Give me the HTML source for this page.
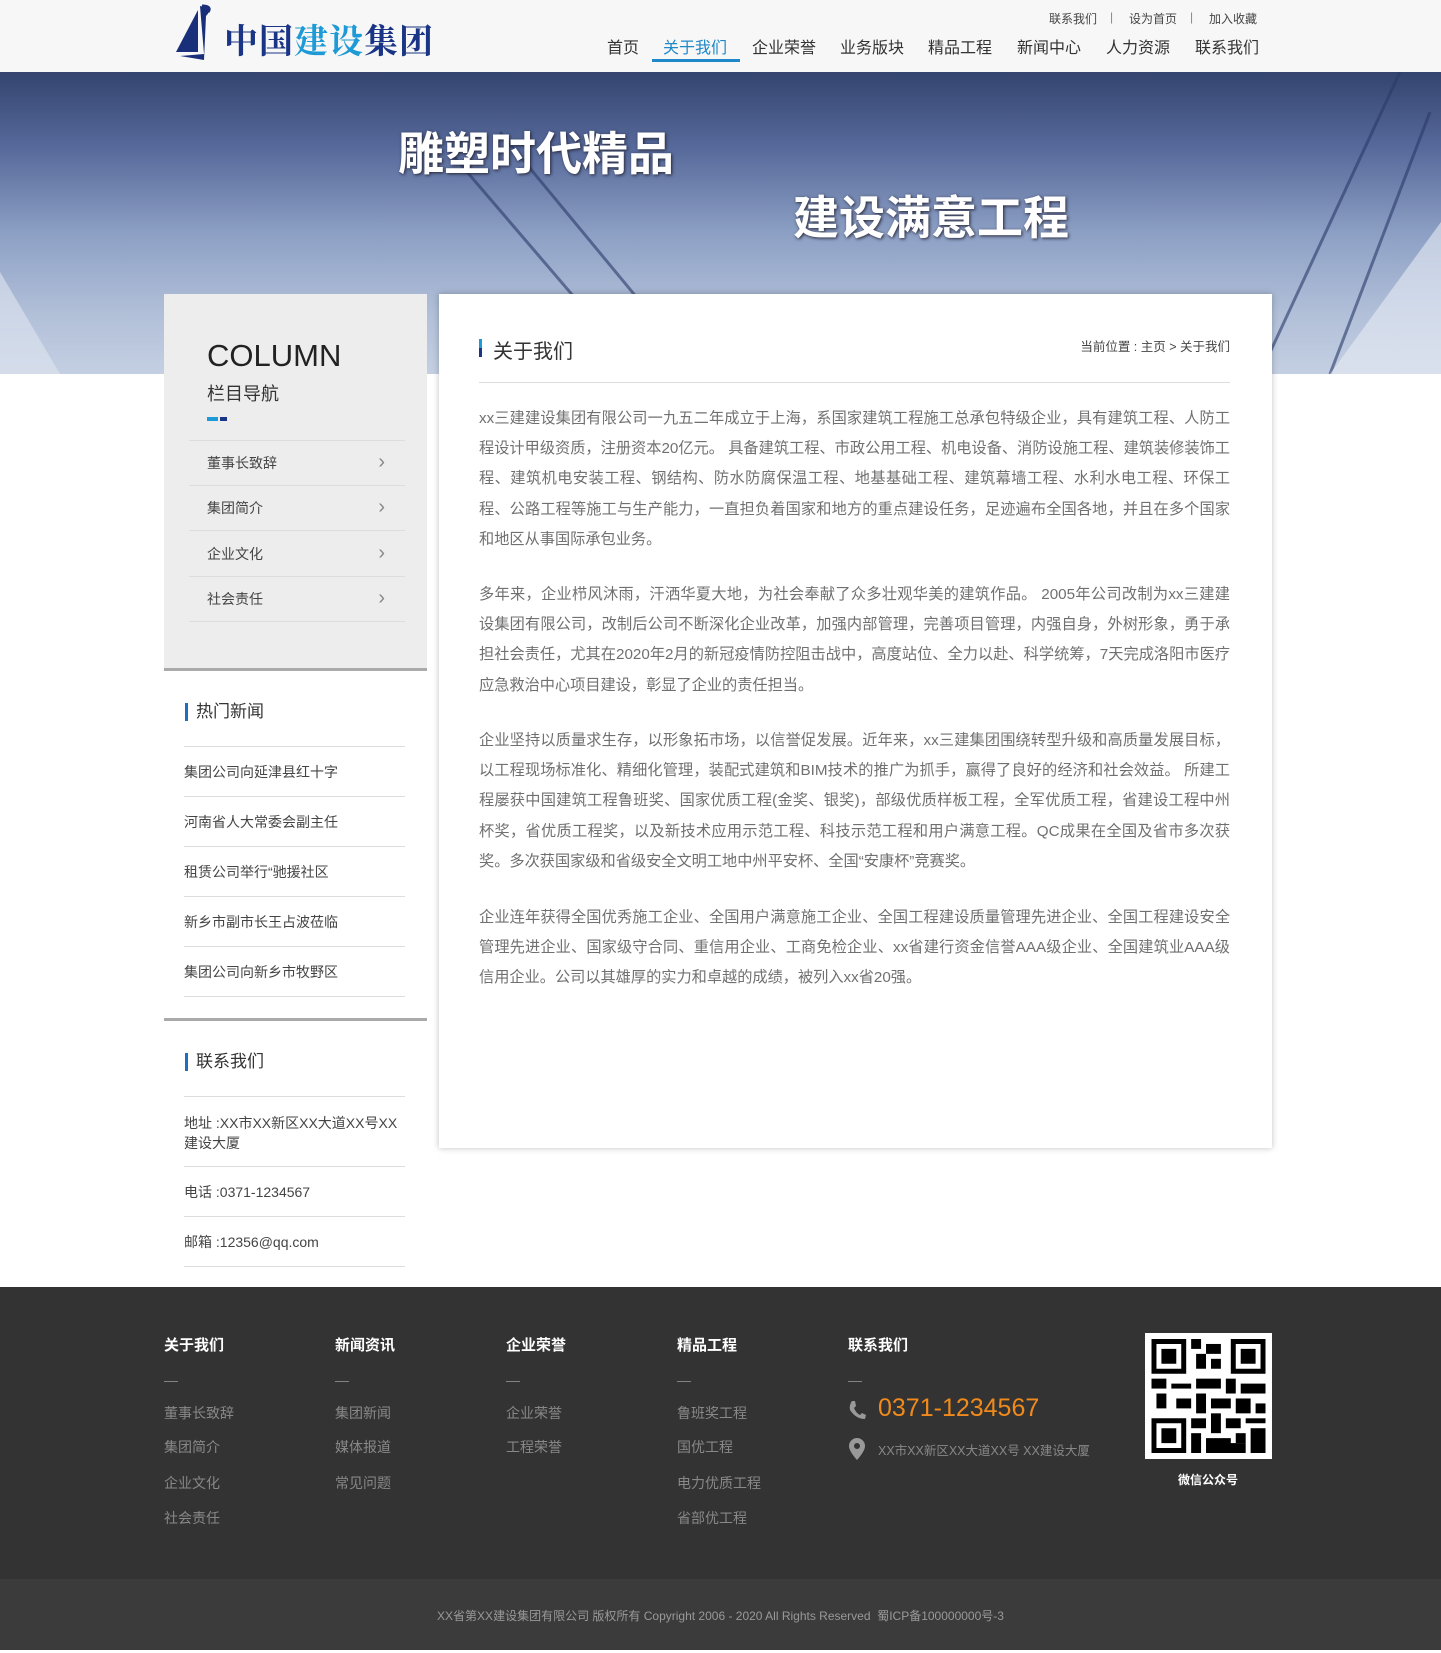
<!DOCTYPE html>
<html><head><meta charset="utf-8"><style>
*{margin:0;padding:0;box-sizing:border-box}
body{width:1441px;height:1650px;background:#fff;font-family:"Liberation Sans","Noto Sans CJK SC",sans-serif;color:#333;position:relative;overflow:hidden}
.a{position:absolute}
#hdr{left:0;top:0;width:1441px;height:72px;background:#f7f7f7}
#ban{left:0;top:72px;width:1441px;height:302px;background:linear-gradient(180deg,#34446f 0%,#56699a 25%,#8fa2c6 55%,#b1bfd8 80%,#c4cfe2 100%);overflow:hidden}
.nav{font-size:16px;color:#333;top:34px}
.tl{font-size:12px;color:#444;top:10px}
.side{left:164px;width:263px;background:#ededed}
.ni{left:189px;width:216px;height:45px;border-bottom:1px solid #ddd;font-size:14px;color:#444;line-height:45px;padding-left:18px}
.ni:after{content:"›";position:absolute;right:20px;font-size:20px;color:#888;top:-1px}
.st{left:185px;font-size:17px;color:#333;border-left:3px solid #1e6fc0;padding-left:8px;line-height:18px}
.li{left:184px;width:221px;border-bottom:1px solid #ddd;font-size:14px;color:#444}
#main{left:439px;top:294px;width:833px;height:854px;background:#fff;box-shadow:0 0 6px rgba(0,0,0,.25)}
.p{position:absolute;left:40px;width:751px;font-size:15.2px;line-height:30.2px;color:#707070;text-align:justify}
#ft{left:0;top:1287px;width:1441px;height:292px;background:#333}
#fb{left:0;top:1579px;width:1441px;height:71px;background:#3b3b3b;font-size:12px;color:#999;text-align:center;line-height:74px}
.fh{font-size:15px;color:#fff;font-weight:bold;top:1334px}
.fl{font-size:14px;color:#888}
</style></head><body>
<div id="hdr" class="a">
 <svg class="a" style="left:174px;top:4px" width="48" height="64" viewBox="0 0 48 64"><path d="M24 6 L24 48 L2 48 Z" fill="#1a2f7a"/><path d="M26 2 Q40 4 32 12 L30 56 L6 52 L30 50 Z" fill="#1a2f7a"/><path d="M28 2 Q38 2 34 8" stroke="#1a2f7a" stroke-width="3" fill="none"/></svg>
 <div class="a" style="left:224px;top:14px;font-size:34px;font-weight:bold;font-family:'Noto Serif CJK SC',serif;letter-spacing:1px"><span style="color:#1a3585">中国</span><span style="color:#1e9ad6">建设</span><span style="color:#1a3585">集团</span></div>
 <div class="a tl" style="left:1049px">联系我们</div><div class="a tl" style="left:1110px;color:#888">|</div>
 <div class="a tl" style="left:1129px">设为首页</div><div class="a tl" style="left:1190px;color:#888">|</div>
 <div class="a tl" style="left:1209px">加入收藏</div>
 <div class="a nav" style="left:607px">首页</div>
 <div class="a nav" style="left:663px;color:#1e88c8">关于我们</div>
 <div class="a" style="left:652px;top:59px;width:88px;height:3px;background:#1e88c8"></div>
 <div class="a nav" style="left:752px">企业荣誉</div>
 <div class="a nav" style="left:840px">业务版块</div>
 <div class="a nav" style="left:928px">精品工程</div>
 <div class="a nav" style="left:1017px">新闻中心</div>
 <div class="a nav" style="left:1106px">人力资源</div>
 <div class="a nav" style="left:1195px">联系我们</div>
</div>
<div id="ban" class="a">
 <svg class="a" style="left:0;top:0" width="1441" height="302"><g stroke="#2a3a6a" stroke-width="3" opacity=".6"><line x1="450" y1="80" x2="640" y2="302"/><line x1="500" y1="60" x2="700" y2="302"/><line x1="1400" y1="0" x2="1260" y2="302"/><line x1="1430" y1="40" x2="1330" y2="302"/></g><polygon points="0,200 60,302 0,302" fill="#e0e6f0" opacity=".6"/><polygon points="1330,302 1441,150 1441,302" fill="#e8edf5" opacity=".6"/></svg>
 <div class="a" style="left:398px;top:46px;font-size:46px;font-weight:bold;color:#fff;text-shadow:1px 1px 3px #223">雕塑时代精品</div>
 <div class="a" style="left:793px;top:110px;font-size:46px;font-weight:bold;color:#fff;text-shadow:1px 1px 3px #223">建设满意工程</div>
</div>
<div class="a side" style="top:294px;height:374px"></div>
<div class="a" style="left:164px;top:668px;width:263px;height:3px;background:#aaa"></div>
<div class="a" style="left:164px;top:1018px;width:263px;height:3px;background:#aaa"></div>
<div class="a" style="left:207px;top:338px;font-size:31px;color:#222">COLUMN</div>
<div class="a" style="left:207px;top:380px;font-size:18px;color:#333">栏目导航</div>
<div class="a" style="left:207px;top:417px;width:11px;height:4px;background:#1e9ad6"></div><div class="a" style="left:220px;top:417px;width:7px;height:4px;background:#1a3585"></div>
<div class="a" style="left:189px;top:440px;width:216px;border-top:1px solid #ddd"></div>
<div class="a ni" style="top:441px">董事长致辞</div>
<div class="a ni" style="top:486px">集团简介</div>
<div class="a ni" style="top:532px">企业文化</div>
<div class="a ni" style="top:577px">社会责任</div>
<div class="a st" style="top:703px">热门新闻</div>
<div class="a" style="left:184px;top:746px;width:221px;border-top:1px solid #ddd"></div>
<div class="a li" style="top:747px;height:50px;line-height:50px">集团公司向延津县红十字</div>
<div class="a li" style="top:797px;height:50px;line-height:50px">河南省人大常委会副主任</div>
<div class="a li" style="top:847px;height:50px;line-height:50px">租赁公司举行“驰援社区</div>
<div class="a li" style="top:897px;height:50px;line-height:50px">新乡市副市长王占波莅临</div>
<div class="a li" style="top:947px;height:50px;line-height:50px">集团公司向新乡市牧野区</div>
<div class="a st" style="top:1053px">联系我们</div>
<div class="a" style="left:184px;top:1096px;width:221px;border-top:1px solid #ddd"></div>
<div class="a li" style="top:1097px;height:70px;padding-top:16px;line-height:20px">地址 :XX市XX新区XX大道XX号XX建设大厦</div>
<div class="a li" style="top:1167px;height:50px;line-height:50px">电话 :0371-1234567</div>
<div class="a li" style="top:1217px;height:50px;line-height:50px">邮箱 :12356@qq.com</div>
<div id="main" class="a">
 <div class="a" style="left:40px;top:45px;width:3px;height:18px;background:linear-gradient(#1e9ad6 50%,#1a3585 50%)"></div>
 <div class="a" style="left:54px;top:41px;font-size:20px;color:#333">关于我们</div>
 <div class="a" style="right:42px;top:42px;font-size:12.5px;color:#444">当前位置 : 主页 &gt; 关于我们</div>
 <div class="a" style="left:40px;top:88px;width:751px;border-top:1px solid #ddd"></div>
 <div class="p" style="top:110px">xx三建建设集团有限公司一九五二年成立于上海，系国家建筑工程施工总承包特级企业，具有建筑工程、人防工程设计甲级资质，注册资本20亿元。 具备建筑工程、市政公用工程、机电设备、消防设施工程、建筑装修装饰工程、建筑机电安装工程、钢结构、防水防腐保温工程、地基基础工程、建筑幕墙工程、水利水电工程、环保工程、公路工程等施工与生产能力，一直担负着国家和地方的重点建设任务，足迹遍布全国各地，并且在多个国家和地区从事国际承包业务。</div>
 <div class="p" style="top:286px">多年来，企业栉风沐雨，汗洒华夏大地，为社会奉献了众多壮观华美的建筑作品。 2005年公司改制为xx三建建设集团有限公司，改制后公司不断深化企业改革，加强内部管理，完善项目管理，内强自身，外树形象，勇于承担社会责任，尤其在2020年2月的新冠疫情防控阻击战中，高度站位、全力以赴、科学统筹，7天完成洛阳市医疗应急救治中心项目建设，彰显了企业的责任担当。</div>
 <div class="p" style="top:432px">企业坚持以质量求生存，以形象拓市场，以信誉促发展。近年来，xx三建集团围绕转型升级和高质量发展目标，以工程现场标准化、精细化管理，装配式建筑和BIM技术的推广为抓手，赢得了良好的经济和社会效益。 所建工程屡获中国建筑工程鲁班奖、国家优质工程(金奖、银奖)，部级优质样板工程，全军优质工程，省建设工程中州杯奖，省优质工程奖，以及新技术应用示范工程、科技示范工程和用户满意工程。QC成果在全国及省市多次获奖。多次获国家级和省级安全文明工地中州平安杯、全国“安康杯”竞赛奖。</div>
 <div class="p" style="top:609px">企业连年获得全国优秀施工企业、全国用户满意施工企业、全国工程建设质量管理先进企业、全国工程建设安全管理先进企业、国家级守合同、重信用企业、工商免检企业、xx省建行资金信誉AAA级企业、全国建筑业AAA级信用企业。公司以其雄厚的实力和卓越的成绩，被列入xx省20强。</div>
</div>
<div id="ft" class="a"></div>
<div class="a fh" style="left:164px">关于我们</div><div class="a fh" style="left:335px">新闻资讯</div><div class="a fh" style="left:506px">企业荣誉</div><div class="a fh" style="left:677px">精品工程</div><div class="a fh" style="left:848px">联系我们</div>
<div class="a fl" style="left:164px;top:1372px">—</div><div class="a fl" style="left:335px;top:1372px">—</div><div class="a fl" style="left:506px;top:1372px">—</div><div class="a fl" style="left:677px;top:1372px">—</div><div class="a fl" style="left:848px;top:1372px">—</div>
<div class="a fl" style="left:164px;top:1403px">董事长致辞</div><div class="a fl" style="left:164px;top:1437px">集团简介</div><div class="a fl" style="left:164px;top:1473px">企业文化</div><div class="a fl" style="left:164px;top:1508px">社会责任</div>
<div class="a fl" style="left:335px;top:1403px">集团新闻</div><div class="a fl" style="left:335px;top:1437px">媒体报道</div><div class="a fl" style="left:335px;top:1473px">常见问题</div>
<div class="a fl" style="left:506px;top:1403px">企业荣誉</div><div class="a fl" style="left:506px;top:1437px">工程荣誉</div>
<div class="a fl" style="left:677px;top:1403px">鲁班奖工程</div><div class="a fl" style="left:677px;top:1437px">国优工程</div><div class="a fl" style="left:677px;top:1473px">电力优质工程</div><div class="a fl" style="left:677px;top:1508px">省部优工程</div>
<svg class="a" style="left:848px;top:1400px" width="18" height="20" viewBox="0 0 18 20"><path d="M4 1 L7 1 L8 6 L6 8 Q8 13 12 15 L14 13 L18 15 L17 19 Q8 19 2 10 Q1 5 4 1Z" fill="#999"/></svg>
<div class="a" style="left:878px;top:1394px;font-size:25px;color:#f08a1c">0371-1234567</div>
<svg class="a" style="left:849px;top:1438px" width="16" height="22" viewBox="0 0 16 22"><path d="M8 0 A8 8 0 0 1 16 8 Q16 13 8 22 Q0 13 0 8 A8 8 0 0 1 8 0Z M8 5 A3 3 0 1 0 8 11 A3 3 0 1 0 8 5Z" fill="#999" fill-rule="evenodd"/></svg>
<div class="a" style="left:878px;top:1440px;font-size:12.5px;color:#888">XX市XX新区XX大道XX号 XX建设大厦</div>
<div class="a" style="left:1145px;top:1333px;width:127px;height:126px;background:#fff;padding:6px">
<svg width="115" height="114" viewBox="0 0 23 23"><g fill="#000"><path d="M0 0h7v7h-7zM1 1v5h5v-5zM2 2h3v3h-3z" fill-rule="evenodd"/><path d="M16 0h7v7h-7zM17 1v5h5v-5zM18 2h3v3h-3z" fill-rule="evenodd"/><path d="M0 16h7v7h-7zM1 17v5h5v-5zM2 18h3v3h-3z" fill-rule="evenodd"/><rect x="8" y="0" width="2" height="2"/><rect x="11" y="1" width="3" height="2"/><rect x="9" y="3" width="2" height="3"/><rect x="12" y="4" width="2" height="2"/><rect x="0" y="8" width="3" height="2"/><rect x="4" y="9" width="4" height="1"/><rect x="9" y="8" width="5" height="2"/><rect x="15" y="8" width="2" height="3"/><rect x="18" y="9" width="5" height="2"/><rect x="1" y="11" width="2" height="3"/><rect x="5" y="12" width="3" height="2"/><rect x="9" y="11" width="2" height="4"/><rect x="12" y="12" width="4" height="2"/><rect x="17" y="12" width="3" height="3"/><rect x="21" y="13" width="2" height="2"/><rect x="8" y="16" width="3" height="2"/><rect x="12" y="15" width="2" height="4"/><rect x="15" y="16" width="3" height="2"/><rect x="19" y="16" width="4" height="1"/><rect x="8" y="19" width="2" height="4"/><rect x="11" y="20" width="5" height="3"/><rect x="17" y="19" width="2" height="2"/><rect x="20" y="18" width="3" height="5"/><rect x="15" y="21" width="4" height="2"/></g></svg></div>
<div class="a" style="left:1178px;top:1471px;font-size:12px;color:#fff;font-weight:bold">微信公众号</div>
<div id="fb" class="a">XX省第XX建设集团有限公司 版权所有 Copyright 2006 - 2020 All Rights Reserved &nbsp;蜀ICP备100000000号-3</div>
</body></html>
